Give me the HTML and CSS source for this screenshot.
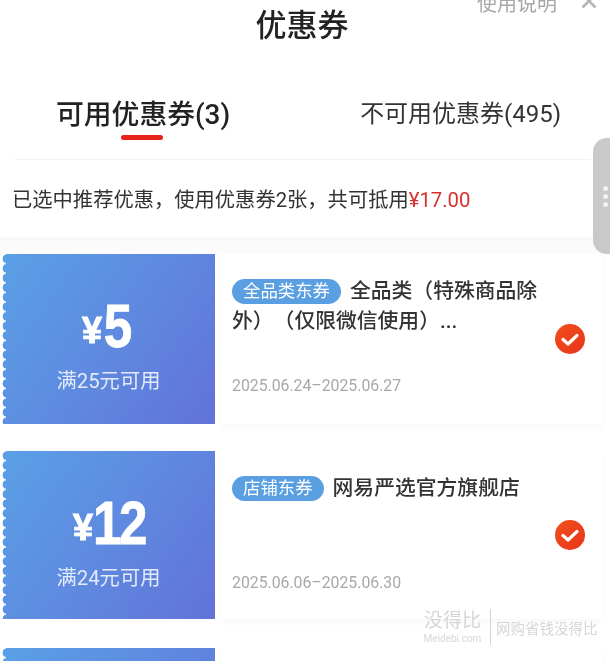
FILE: index.html
```html
<!DOCTYPE html>
<html lang="zh-CN">
<head>
<meta charset="utf-8">
<title>优惠券</title>
<link rel="stylesheet" href="styles.css">
</head>
<body>
<div class="page">
  <header class="header">
    <h1 class="title">优惠券</h1>
    <div class="actions">
      <span class="help">使用说明</span>
      <svg class="close" width="16" height="16" viewBox="0 0 16 16"><path d="M1.5 1.5l13 13M14.5 1.5l-13 13" stroke="#b5b5b5" stroke-width="2.6" fill="none"/></svg>
    </div>
  </header>

  <nav class="tabs">
    <div class="tab tab-active">
      <span>可用优惠券(3)</span>
      <i class="tab-line"></i>
    </div>
    <div class="tab tab-other"><span>不可用优惠券(495)</span></div>
  </nav>

  <div class="summary">已选中推荐优惠，使用优惠券2张，共可抵用<span class="price">¥17.00</span></div>
  <div class="band"></div>

  <section class="list">
    <article class="coupon">
      <div class="face">
        <div class="amount"><span class="yen">¥</span><span class="num">5</span></div>
        <div class="cond">满25元可用</div>
      </div>
      <div class="info">
        <div class="content">
          <p class="name"><span class="tag">全品类东券</span>全品类（特殊商品除外）（仅限微信使用）...</p>
          <p class="date">2025.06.24–2025.06.27</p>
        </div>
        <svg class="check" width="30" height="30" viewBox="0 0 30 30"><defs><linearGradient id="c1" x1="0" y1="0" x2="1" y2="1"><stop offset="0" stop-color="#f0501c"/><stop offset="1" stop-color="#e8341a"/></linearGradient></defs><circle cx="15" cy="15" r="15" fill="url(#c1)"/><path d="M8 15.5l5 4.5 9-8.5" stroke="#fff" stroke-width="3.2" fill="none" stroke-linecap="round" stroke-linejoin="round"/></svg>
      </div>
    </article>

    <article class="coupon coupon-short">
      <div class="face">
        <div class="amount"><span class="yen">¥</span><span class="num num-wide">12</span></div>
        <div class="cond">满24元可用</div>
      </div>
      <div class="info">
        <div class="content">
          <p class="name"><span class="tag">店铺东券</span>网易严选官方旗舰店</p>
          <p class="date">2025.06.06–2025.06.30</p>
        </div>
        <svg class="check" width="30" height="30" viewBox="0 0 30 30"><defs><linearGradient id="c2" x1="0" y1="0" x2="1" y2="1"><stop offset="0" stop-color="#f0501c"/><stop offset="1" stop-color="#e8341a"/></linearGradient></defs><circle cx="15" cy="15" r="15" fill="url(#c2)"/><path d="M8 15.5l5 4.5 9-8.5" stroke="#fff" stroke-width="3.2" fill="none" stroke-linecap="round" stroke-linejoin="round"/></svg>
      </div>
    </article>

    <article class="coupon">
      <div class="face"></div>
      <div class="info"></div>
    </article>
  </section>

  <aside class="handle"><i></i><i></i><i></i></aside>

  <aside class="watermark">
    <div class="wm-brand">
      <span class="wm-cn">没得比</span>
      <span class="wm-en">Meidebi.com</span>
    </div>
    <span class="wm-slogan">网购省钱没得比</span>
  </aside>
</div>
</body>
</html>
```

FILE: styles.css
```css
* { box-sizing: border-box; }

html, body {
  margin: 0;
  padding: 0;
  background: #fff;
}

body {
  width: 610px;
  height: 661px;
  overflow: hidden;
  font-family: Roboto, "Noto Sans CJK SC", sans-serif;
  color: #2b2b2b;
  text-spacing-trim: space-all;
}

.page {
  position: relative;
  width: 610px;
  height: 661px;
  overflow: hidden;
  filter: blur(0.45px);
}

.header {
  height: 52px;
  padding-right: 6px;
  display: flex;
  justify-content: center;
  align-items: center;
}

.title {
  margin: 0;
  font-size: 31px;
  line-height: 52px;
  font-weight: 500;
  color: #222;
}

.actions {
  position: absolute;
  top: -8px;
  right: 13px;
  display: flex;
  align-items: center;
  gap: 24px;
  color: #a8a8a8;
  font-size: 20px;
  line-height: 24px;
}

.close { margin-top: -6px; }

.tabs {
  height: 108px;
  padding: 44px 0 0 42px;
  margin: 0 20px 0 14px;
  display: flex;
  gap: 130px;
  border-bottom: 1px solid #f3f3f3;
}

.tab {
  display: flex;
  flex-direction: column;
}

.tab-active {
  font-size: 27.8px;
  line-height: 38px;
  font-weight: 500;
  color: #222;
}

.tab-other {
  font-size: 24px;
  line-height: 36px;
  color: #333;
}

.tab-line {
  display: block;
  width: 42px;
  height: 4.5px;
  margin: 1px 0 0 65px;
  border-radius: 3px;
  background: #e8231a;
}

.summary {
  height: 77px;
  padding: 2px 0 0 12px;
  font-size: 20.3px;
  line-height: 77px;
  color: #333;
}

.price { color: #d8302a; }

.band {
  height: 17px;
  background: linear-gradient(#f9f9f9, #fcfcfc);
}

.list {
  display: flex;
  flex-direction: column;
  gap: 27px;
  padding: 0 8px 0 2px;
  background: #fff;
}

.coupon {
  display: flex;
  gap: 7px;
  height: 170px;
  flex-shrink: 0;
}

.coupon-short {
  height: 168px;
  margin-bottom: 2px;
}

.face {
  width: 213px;
  flex-shrink: 0;
  display: flex;
  flex-direction: column;
  align-items: center;
  color: #fff;
  background: linear-gradient(125deg, #5aa0e6 0%, #5f88df 55%, #6272d8 100%);
  -webkit-mask:
    radial-gradient(circle at 5px 50%, #000 4.2px, transparent 4.7px) 0 0 / 6px 9.6px repeat-y,
    linear-gradient(#000, #000) 4px 0 / 100% 100% no-repeat;
  mask:
    radial-gradient(circle at 5px 50%, #000 4.2px, transparent 4.7px) 0 0 / 6px 9.6px repeat-y,
    linear-gradient(#000, #000) 4px 0 / 100% 100% no-repeat;
}

.amount {
  margin-top: 38px;
  height: 68px;
  display: flex;
  align-items: center;
  justify-content: center;
  font-family: "Liberation Sans", sans-serif;
  font-weight: 700;
}

.yen {
  font-size: 36px;
  margin-top: 10px;
  margin-right: -1px;
  -webkit-text-stroke: 1px #fff;
}

.num {
  font-size: 61px;
  line-height: 68px;
  transform: scaleX(0.84);
  -webkit-text-stroke: 0.8px #fff;
}

.num-wide {
  margin: 0 -6px 0 -4px;
  letter-spacing: -3px;
}

.cond {
  margin-top: 7px;
  font-size: 20.3px;
  line-height: 28px;
  color: #e3ebfb;
}

.info {
  flex: 1;
  display: flex;
  align-items: center;
  padding: 0 17px 0 10px;
  background: #fff;
  box-shadow: 0 3px 8px rgba(0, 0, 0, 0.035);
}

.content {
  width: 323px;
  height: 100%;
  padding: 22px 0 26px;
  display: flex;
  flex-direction: column;
  justify-content: space-between;
}

.coupon-short .content { padding-bottom: 24px; }

.name {
  margin: 0;
  font-size: 20.8px;
  line-height: 30px;
  font-weight: 500;
  color: #333;
}

.tag {
  display: inline-block;
  margin-right: 9px;
  padding: 0 11px;
  height: 25px;
  line-height: 25px;
  border-radius: 13px;
  background: #5a9fe2;
  color: #fff;
  font-size: 17.4px;
  font-weight: 400;
  vertical-align: 1px;
}

.date {
  margin: 0;
  font-size: 15.8px;
  line-height: 24px;
  color: #a8a8a8;
}

.check { flex-shrink: 0; }

.handle {
  position: absolute;
  right: -14px;
  top: 138px;
  width: 31px;
  height: 116px;
  border-radius: 14px;
  background: #c9c9c9;
  display: flex;
  flex-direction: column;
  gap: 3px;
  justify-content: center;
  padding-left: 10px;
}

.handle i {
  width: 5px;
  height: 5px;
  border-radius: 50%;
  background: #f2f2f2;
}

.watermark {
  position: absolute;
  left: 424px;
  top: 609px;
  display: flex;
  align-items: center;
  color: #d6d6d6;
}

.wm-brand {
  width: 67px;
  display: flex;
  flex-direction: column;
  align-items: center;
  padding-right: 9px;
  border-right: 1px solid #d2d2d2;
}

.wm-cn {
  font-size: 19px;
  line-height: 23px;
}

.wm-en {
  font-size: 10px;
  line-height: 13px;
}

.wm-slogan {
  margin: 5px 0 0 5px;
  font-size: 14.5px;
  line-height: 20px;
}
```
